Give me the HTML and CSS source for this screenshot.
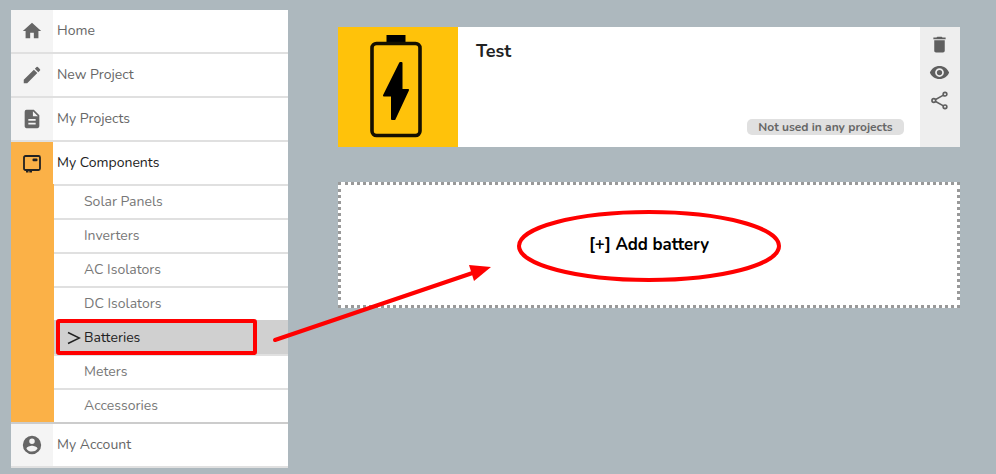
FILE: index.html
```html
<!DOCTYPE html>
<html lang="en">
<head>
<meta charset="utf-8">
<title>Batteries</title>
<link rel="stylesheet" href="styles.css">
</head>
<body>
<div class="page">
  <nav class="sidebar">
    <a class="item"><span class="icon"><svg viewBox="0 0 24 24"><path d="M10 20v-6h4v6h5v-8h3L12 3 2 12h3v8z"/></svg></span><span class="label">Home</span></a>
    <a class="item"><span class="icon"><svg viewBox="0 0 24 24"><path d="M3 17.25V21h3.75L17.81 9.94l-3.75-3.75zM20.71 7.04a1 1 0 0 0 0-1.41l-2.34-2.34a1 1 0 0 0-1.41 0l-1.83 1.83 3.75 3.75z"/></svg></span><span class="label">New Project</span></a>
    <a class="item"><span class="icon"><svg viewBox="0 0 24 24"><path d="M14 2H6a2 2 0 0 0-2 2v16c0 1.100.89 2 1.990 2H18a2 2 0 0 0 2-2V8zm2 16H8v-2h8zm0-4H8v-2h8zm-3-5V3.500L18.500 9z"/></svg></span><span class="label">My Projects</span></a>
    <a class="item active"><span class="icon"><svg viewBox="0 0 22 22"><rect class="line" x="3" y="4" width="16" height="14" rx="1.500"/><rect x="11.500" y="6.500" width="5" height="2.800" rx="1"/><path d="M5 18h2.500v2.500H5zM8.300 18h2.700v2.500H8.300z"/></svg></span><span class="label">My Components</span></a>
    <div class="submenu">
      <a>Solar Panels</a>
      <a>Inverters</a>
      <a>AC Isolators</a>
      <a class="before">DC Isolators</a>
      <a class="selected"><svg class="chevron" viewBox="0 0 14 14"><path d="M1 1.500 12.500 7 1 12.500"/></svg>Batteries</a>
      <a>Meters</a>
      <a>Accessories</a>
    </div>
    <a class="item"><span class="icon"><svg viewBox="0 0 24 24"><path fill-rule="evenodd" d="M12 2a10 10 0 1 0 0 20 10 10 0 0 0 0-20zm0 3a3 3 0 1 1 0 6 3 3 0 0 1 0-6zm0 14.200a7.200 7.200 0 0 1-6-3.220c.03-1.990 4-3.080 6-3.080s5.970 1.090 6 3.080a7.200 7.200 0 0 1-6 3.220z"/></svg></span><span class="label">My Account</span></a>
  </nav>
  <main>
    <section class="card">
      <div class="thumb"><svg viewBox="0 0 120 120"><path d="M48.500 8h19v9h-19z"/><rect class="case" x="34" y="16.500" width="48" height="92" rx="4.500"/><path class="bolt" d="M62.200 36 46 68.500h8V92h2.500L70 63h-6.500V36z"/></svg></div>
      <div class="body"><h2>Test</h2><span class="badge">Not used in any projects</span></div>
      <div class="actions">
        <svg viewBox="0 0 24 24"><path d="M6 19c0 1.100.9 2 2 2h8a2 2 0 0 0 2-2V7H6zM19 4h-3.500l-1-1h-5l-1 1H5v2h14z"/></svg>
        <svg viewBox="0 0 24 24"><path fill-rule="evenodd" d="M12 4.500C7 4.500 2.730 7.610 1 12c1.730 4.390 6 7.500 11 7.500s9.270-3.110 11-7.500c-1.730-4.390-6-7.500-11-7.500zM12 17a5 5 0 1 1 0-10 5 5 0 0 1 0 10zm0-8a3 3 0 1 0 0 6 3 3 0 0 0 0-6z"/></svg>
        <svg class="share" viewBox="0 0 24 24"><path d="m18 5-12.500 7L18 19"/><circle cx="18.300" cy="4.800" r="2.100"/><circle cx="5.500" cy="12" r="2.100"/><circle cx="18.300" cy="19.200" r="2.100"/></svg>
      </div>
    </section>
    <button class="add"><span>[+] Add battery</span></button>
  </main>
  <svg class="marks" viewBox="0 0 996 474">
    <rect x="58" y="321" width="197" height="32" rx="1"/>
    <ellipse cx="649" cy="246" rx="130" ry="34"/>
    <path d="M275 340 474 272.500"/>
    <path class="head" d="m469 265 22 2-17 14z"/>
  </svg>
</div>
</body>
</html>
```
FILE: styles.css
```css
* { box-sizing: border-box; }
body { margin: 0; background: #adb8be; color: #666; font-family: "Nunito", "Open Sans", sans-serif; font-size: 14px; }
.page { position: relative; display: flex; align-items: flex-start; width: 996px; height: 474px; padding: 10px 36px 0 11px; gap: 50px; overflow: hidden; }
.sidebar { width: 277px; flex: none; background: #fff; }
.item { display: flex; height: 44px; border-bottom: 2px solid #e0e0e0; }
.icon { width: 42px; background: #f4f4f4; display: flex; align-items: center; justify-content: center; }
.icon svg { width: 22px; height: 22px; fill: #666; }
.label { padding-left: 4px; line-height: 41px; }
.active { height: 42px; border: 0; color: #222; }
.active .icon { background: #fbb147; }
.active .icon svg { fill: #222; }
.active .line { fill: none; stroke: #222; stroke-width: 1.800; }
.submenu { padding: 2px 0 0 43px; border-bottom: 2px solid #ccc; color: #777; background: linear-gradient(90deg, #fbb147 43px, transparent 43px), linear-gradient(#e0e0e0 2px, #fff 2px); }
.submenu a { position: relative; display: block; height: 34px; padding-left: 30px; line-height: 31px; border-bottom: 2px solid #e0e0e0; }
.submenu a:last-child { height: 32px; border-bottom: 0; }
.submenu .before { border-color: #d0d0d0; }
.submenu .selected { background: #d0d0d0; background-clip: padding-box; color: #222; }
.chevron { position: absolute; left: 13px; top: 9px; width: 14px; height: 14px; fill: none; stroke: #222; stroke-width: 1.500; }
main { flex: 1; padding-top: 17px; }
.card { display: flex; width: 622px; height: 120px; background: #fff; }
.thumb { width: 120px; background: #ffc20a; }
.thumb svg { display: block; width: 120px; height: 120px; }
.case { fill: none; stroke: #151000; stroke-width: 3.600; }
.bolt { stroke: #000; stroke-width: 2; stroke-linejoin: round; }
.body { flex: 1; display: flex; flex-direction: column; justify-content: space-between; padding: 12px 16px 12px 18px; }
h2 { margin: 0; color: #222; font-size: 18px; line-height: 24px; font-weight: 700; }
.badge { align-self: flex-end; width: 157px; height: 16px; border-radius: 5px; background: #e0e0e0; text-align: center; font-size: 12px; line-height: 16px; font-weight: 700; white-space: nowrap; }
.actions { width: 40px; background: #eee; display: flex; flex-direction: column; align-items: center; padding: 7px 1px 0 0; gap: 7px; }
.actions svg { width: 21px; height: 21px; fill: #5f5f5f; }
.actions .share { fill: none; stroke: #5f5f5f; stroke-width: 1.900; }
.share circle { fill: #eee; }
.add { display: flex; align-items: center; justify-content: center; width: 622px; height: 126px; margin-top: 35px; padding: 0 0 2px; border: 0; color: #000; font: 700 16.8px "Nunito", "Open Sans", sans-serif;
  background:
    linear-gradient(#999, #999) 0 0 / 3px 3px no-repeat,
    linear-gradient(#999, #999) 0 100% / 3px 3px no-repeat,
    linear-gradient(#999, #999) 100% 0 / 3px 3px no-repeat,
    linear-gradient(#999, #999) 100% 100% / 3px 3px no-repeat,
    repeating-linear-gradient(90deg, #999 0 3px, #fff 3px 6px) 7px 0 / 615px 3px no-repeat,
    repeating-linear-gradient(90deg, #999 0 3px, #fff 3px 6px) 7px 100% / 615px 3px no-repeat,
    repeating-linear-gradient(#999 0 3px, #fff 3px 6px) 0 7px / 3px 113px no-repeat,
    repeating-linear-gradient(#999 0 3px, #fff 3px 6px) 100% 7px / 3px 113px no-repeat, #fff; }
.marks { position: absolute; left: 0; top: 0; width: 996px; height: 474px; fill: none; stroke: #f00; stroke-width: 4; stroke-linecap: round; pointer-events: none; }
.marks .head { fill: #f00; stroke: none; }
```
